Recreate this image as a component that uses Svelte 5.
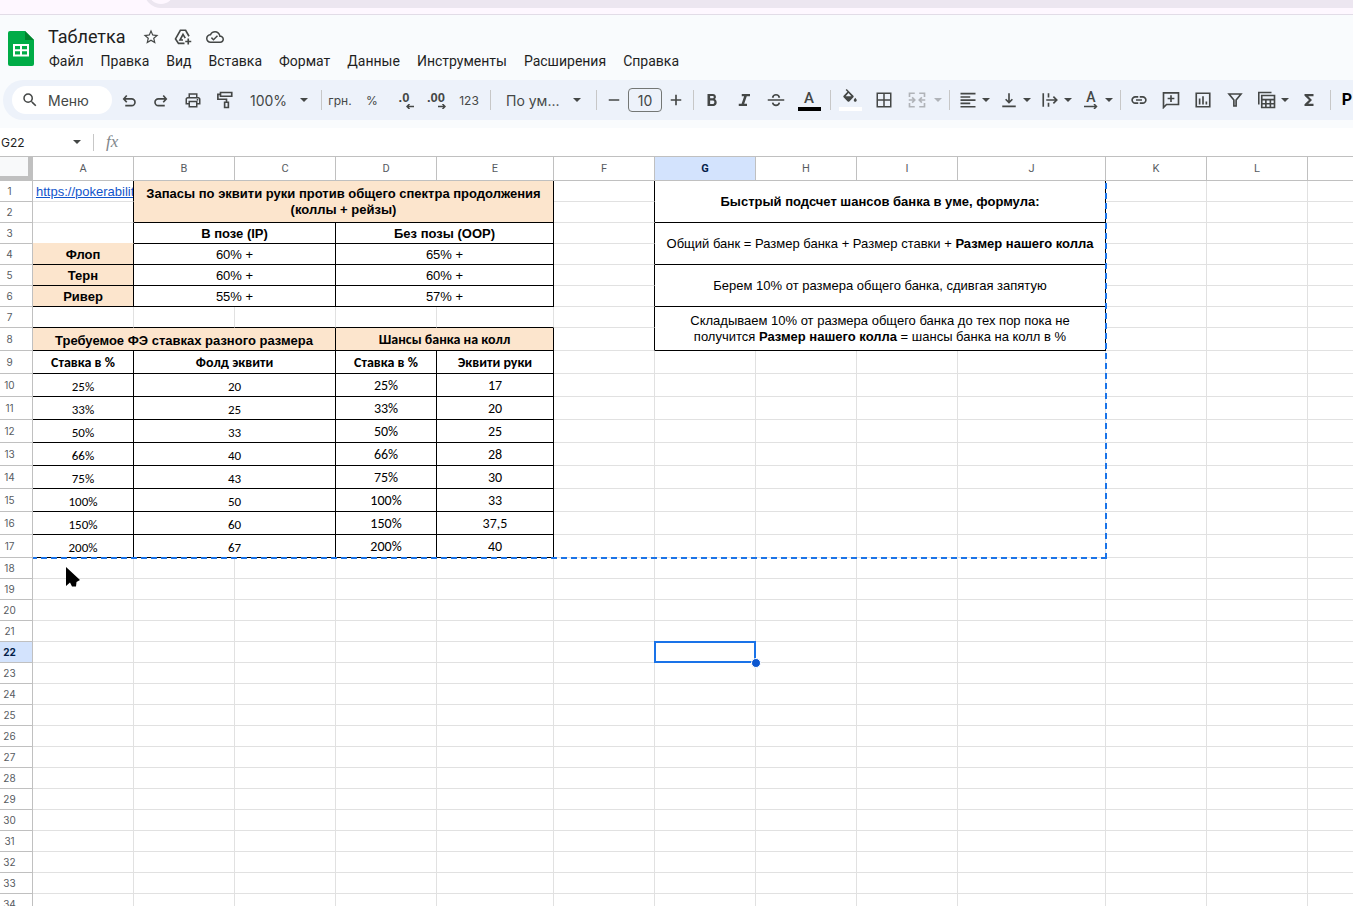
<script lang="ts">
  type Cell = {
    text?: string;
    bold?: string;
    after?: string;
    cols?: number;
    rows?: number;
    cls?: string;
  };

  const columns = [
    { name: "A", width: 101 },
    { name: "B", width: 101 },
    { name: "C", width: 101 },
    { name: "D", width: 101 },
    { name: "E", width: 117 },
    { name: "F", width: 101 },
    { name: "G", width: 101 },
    { name: "H", width: 101 },
    { name: "I", width: 101 },
    { name: "J", width: 148 },
    { name: "K", width: 101 },
    { name: "L", width: 101 },
    { name: "M", width: 101 },
  ];

  const menus = ["Файл", "Правка", "Вид", "Вставка", "Формат", "Данные", "Инструменты", "Расширения", "Справка"];

  const cells: Record<string, Cell> = {
    B1: { text: "Запасы по эквити руки против общего спектра продолжения (коллы + рейзы)", cols: 4, rows: 2, cls: "box fill strong" },
    B3: { text: "В позе (IP)", cols: 2, cls: "box strong" },
    D3: { text: "Без позы (OOP)", cols: 2, cls: "box strong" },
    A4: { text: "Флоп", cls: "box fill strong" },
    B4: { text: "60% +", cols: 2, cls: "box" },
    D4: { text: "65% +", cols: 2, cls: "box" },
    A5: { text: "Терн", cls: "box fill strong" },
    B5: { text: "60% +", cols: 2, cls: "box" },
    D5: { text: "60% +", cols: 2, cls: "box" },
    A6: { text: "Ривер", cls: "box fill strong" },
    B6: { text: "55% +", cols: 2, cls: "box" },
    D6: { text: "57% +", cols: 2, cls: "box" },
    A8: { text: "Требуемое ФЭ ставках разного размера", cols: 3, cls: "box fill strong low" },
    D8: { text: "Шансы банка на колл", cols: 2, cls: "box fill strong calibri" },
    A9: { text: "Ставка в %", cls: "box strong calibri" },
    B9: { text: "Фолд эквити", cols: 2, cls: "box strong calibri" },
    D9: { text: "Ставка в %", cls: "box strong calibri" },
    E9: { text: "Эквити руки", cls: "box strong calibri" },
    G1: { bold: "Быстрый подсчет шансов банка в уме, формула:", cols: 4, rows: 2, cls: "box" },
    G3: { text: "Общий банк = Размер банка + Размер ставки + ", bold: "Размер нашего колла", cols: 4, rows: 2, cls: "box" },
    G5: { text: "Берем 10% от размера общего банка, сдивгая запятую", cols: 4, rows: 2, cls: "box" },
    G7: {
      text: "Складываем 10% от размера общего банка до тех пор пока не получится ",
      bold: "Размер нашего колла",
      after: " = шансы банка на колл в %",
      cols: 4,
      rows: 2,
      cls: "box roomy",
    },
  };

  const odds = [
    ["25%", "20", "17"],
    ["33%", "25", "20"],
    ["50%", "33", "25"],
    ["66%", "40", "28"],
    ["75%", "43", "30"],
    ["100%", "50", "33"],
    ["150%", "60", "37,5"],
    ["200%", "67", "40"],
  ];
  odds.forEach(([bet, fold, equity], i) => {
    const r = 10 + i;
    cells["A" + r] = { text: bet, cls: "box calibri small" };
    cells["B" + r] = { text: fold, cols: 2, cls: "box calibri small" };
    cells["D" + r] = { text: bet, cls: "box calibri" };
    cells["E" + r] = { text: equity, cls: "box calibri" };
  });

  // cells swallowed by a merge are not rendered
  const covered = new Set<string>();
  for (const key in cells) {
    const start = columns.findIndex((c) => c.name === key[0]);
    const row = Number(key.slice(1));
    for (let y = 0; y < (cells[key].rows ?? 1); y++) {
      for (let x = 0; x < (cells[key].cols ?? 1); x++) {
        if (x || y) covered.add(columns[start + x].name + (row + y));
      }
    }
  }

  const rows = Array.from({ length: 50 }, (_, i) => i + 1);
  const rowHeight = (r: number) => (r >= 8 && r <= 17 ? 23 : 21);

  function borders(col: string, r: number) {
    let cls = "";
    if ((col === "A" && r < 4) || (col === "F" && r < 9)) cls += " edge-right";
    if (r === 7 && col < "F") cls += " edge-bottom";
    if (col === "A" && r === 3) cls += " soft-bottom";
    return cls;
  }

  const active = { col: "G", row: 22 };
  let nameBox = "G22";
  let formula = "";
  let fontSize = "10";

  // marching-ants range A1:J17
  const copyWidth = columns.slice(0, 10).reduce((sum, c) => sum + c.width, 0) + 1;
  const copyHeight = rows.slice(0, 17).reduce((sum, r) => sum + rowHeight(r), 0) + 1;

  const icons: Record<string, { f?: string; s?: string }> = {
    star: { f: "M22 9.24l-7.19-.62L12 2 9.19 8.63 2 9.24l5.46 4.73L5.82 21 12 17.27 18.18 21l-1.63-7.03L22 9.24zM12 15.4l-3.76 2.27 1-4.28-3.32-2.88 4.38-.38L12 6.1l1.71 4.04 4.38.38-3.32 2.88 1 4.28L12 15.4z" },
    drive: { s: "M14 20.500H6L2 14.500 8.500 3h7l4.500 8M12 16H8l4-7.500 3 5M19 14v8M15 18h8" },
    cloud: { f: "M19.35 10.04C18.67 6.59 15.64 4 12 4 9.11 4 6.6 5.64 5.35 8.04 2.34 8.36 0 10.91 0 14c0 3.31 2.69 6 6 6h13c2.76 0 5-2.24 5-5 0-2.64-2.05-4.78-4.65-4.96zM19 18H6c-2.21 0-4-1.79-4-4 0-2.05 1.53-3.76 3.56-3.97l1.07-.11.5-.95C8.08 7.14 9.94 6 12 6c2.62 0 4.88 1.86 5.39 4.43l.3 1.5 1.53.11c1.56.1 2.78 1.41 2.78 2.96 0 1.65-1.35 3-3 3zm-9-3.82l-2.09-2.09L6.5 13.5 10 17l6.01-6.01-1.41-1.41z" },
    search: { f: "M15.5 14h-.79l-.28-.27A6.471 6.471 0 0 0 16 9.5 6.5 6.5 0 1 0 9.500 16c1.61 0 3.09-.59 4.23-1.57l.27.28v.79l5 4.99L20.49 19l-4.99-5zm-6 0C7.01 14 5 11.99 5 9.5S7.01 5 9.500 5 14 7.01 14 9.500 11.99 14 9.500 14z" },
    undo: { s: "M9 6L5 10.500 9 15M5 10.500h10.500a4.500 4.500 0 0 1 0 9H7" },
    redo: { s: "M15 6l4 4.500L15 15M19 10.500H8.500a4.500 4.500 0 0 0 0 9H17" },
    print: { f: "M19 8h-1V3H6v5H5c-1.66 0-3 1.34-3 3v7h4v4h12v-4h4v-7c0-1.66-1.34-3-3-3zM8 5h8v3H8V5zm8 15H8v-5h8v5zm2-4v-3H6v3H4v-5c0-.55.45-1 1-1h14c.55 0 1 .45 1 1v5h-2zM17 10.500h2v2h-2z" },
    paint: { s: "M6 2h15v5H6zM6 4.500H2.500V11h11.500v4M11.500 15h5v7h-5z" },
    plus: { s: "M12 5v14M5 12h14" },
    minus: { s: "M5 12h14" },
    bold: { f: "M15.600 10.79c.97-.67 1.65-1.77 1.65-2.79 0-2.26-1.75-4-4-4H6v16h8.040c2.09 0 4.210-1.900 4.210-4.790 0-1.920-1.160-3.620-2.650-4.420zM9.500 6.800h3.500c.83 0 1.300.67 1.300 1.400s-.67 1.500-1.500 1.500H9.500zm4 10.400h-4v-4.500h4c1 0 1.600 1 1.600 2.200s-.8 2.300-1.600 2.300z" },
    italic: { f: "M9 4v3h3.200l-3.400 10H5v3h11v-3h-3.700l3.400-10H20V4z" },
    strike: { s: "M1 12h22M16.500 9C16 6 14 5 12 5S8 6 7.500 9M7.500 15.500c.5 2.500 2.500 3.700 4.500 3.700s4-1.200 4.500-3.700" },
    bucket: { f: "M16.560 8.940L7.620 0 6.210 1.410l2.380 2.380-5.150 5.150c-.59.59-.59 1.540 0 2.120l5.500 5.500c.29.29.68.44 1.060.44s.77-.15 1.060-.44l5.500-5.500c.59-.58.59-1.530 0-2.120zM6.210 9.500L10 5.210 13.790 9.500zM19 11.500s-2 2.170-2 3.500c0 1.100.9 2 2 2s2-.9 2-2c0-1.330-2-3.500-2-3.500z" },
    grid: { f: "M2 2v20h20V2H2zm9 18H4v-7h7v7zm0-9H4V4h7v7zm9 9h-7v-7h7v7zm0-9h-7V4h7v7z" },
    merge: { s: "M9 3H2v5M2 16v5h7M15 3h7v5M22 16v5h-7M1 12h8M5.500 8.500L9 12l-3.500 3.500M23 12h-8M18.500 8.500L15 12l3.500 3.500" },
    align: { s: "M2 3.500h20M2 8h13M2 12.200h20M2 16.500h13M2 21h20" },
    valign: { s: "M12 3v12M7.500 11L12 15.500 16.500 11M3 20.500h18" },
    wrap: { s: "M3 3v18M10 3v5.500M10 15.500V21M7 12h14M16.500 7.500L21 12l-4.500 4.500" },
    link: { f: "M3.9 12c0-1.710 1.390-3.100 3.100-3.100h4V6.700H7C4.240 6.700 1.700 9.240 1.700 12s2.540 5.300 5.300 5.300h4v-2.200H7c-1.710 0-3.100-1.390-3.100-3.100zM8 13h8v-2H8v2zm9-6.300h-4v2.200h4c1.710 0 3.100 1.390 3.100 3.100s-1.390 3.100-3.100 3.100h-4v2.200h4c2.760 0 5.300-2.540 5.300-5.300S19.760 6.700 17 6.700z" },
    comment: { s: "M2 22V2.500h20V18H6zM12 5.500v9M7.500 10h9" },
    chart: { s: "M3 3h18v18H3zM7.500 10v8M12 7v11M16.500 14v4" },
    filter: { s: "M4 4h16l-6.500 8v8h-3v-8z" },
    views: { s: "M1 18V2h17M5 6h17v16H5zM5 11.500h17M5 17h17M10.500 11.500V22M16.500 11.500V22" },
    sum: { f: "M18 4H6v2.300l6 5.700-6 5.700V20h12v-3h-7l5-5-5-5h7z" },
  };
</script>

{#snippet icon(name: string)}
  <svg class="icon" viewBox="0 0 24 24" aria-hidden="true">
    {#if icons[name].f}<path d={icons[name].f} fill="currentColor" fill-rule="evenodd" />{/if}
    {#if icons[name].s}<path d={icons[name].s} fill="none" stroke="currentColor" stroke-width="2.200" />{/if}
  </svg>
{/snippet}

{#snippet caret()}
  <svg class="caret" viewBox="0 0 8 4" aria-hidden="true"><path d="M0 0h8L4 4z" fill="currentColor" /></svg>
{/snippet}

<div class="page">
  <div class="browser"><div class="address"><span class="site"></span></div></div>

  <header>
    <svg class="logo" viewBox="0 0 26 35" aria-label="Таблицы" role="img">
      <path d="M2 0h15l9 9v24a2 2 0 0 1-2 2H2a2 2 0 0 1-2-2V2a2 2 0 0 1 2-2z" fill="#00ac47" />
      <path d="M17 0l9 9h-9z" fill="#00832d" />
      <path d="M5 13h16v12.500H5zM7 15v3.200h5V15zm7 0v3.200h5V15zM7 20.200v3.300h5v-3.300zm7 0v3.300h5v-3.300z" fill="#fff" fill-rule="evenodd" />
    </svg>
    <div class="heading">
      <div class="title-row">
        <h1>Таблетка</h1>
        <button class="plain" aria-label="Пометить">{@render icon("star")}</button>
        <button class="plain" aria-label="Переместить">{@render icon("drive")}</button>
        <button class="plain" aria-label="Сохранено">{@render icon("cloud")}</button>
      </div>
      <nav>
        {#each menus as item}
          <button>{item}</button>
        {/each}
      </nav>
    </div>
  </header>

  <div class="toolbar">
    <button class="search">{@render icon("search")}<span>Меню</span></button>
    <button aria-label="Отменить">{@render icon("undo")}</button>
    <button aria-label="Повторить">{@render icon("redo")}</button>
    <button aria-label="Печать">{@render icon("print")}</button>
    <button aria-label="Копировать форматирование">{@render icon("paint")}</button>
    <button class="zoom">100%{@render caret()}</button>
    <span class="sep"></span>
    <button class="text">грн.</button>
    <button class="text">%</button>
    <button class="decimal">.0<svg viewBox="0 0 8 5" aria-hidden="true"><path d="M8 2.500H1M3.500 0L1 2.500 3.500 5" fill="none" stroke="currentColor" stroke-width="1.500" /></svg></button>
    <button class="decimal">.00<svg viewBox="0 0 8 5" aria-hidden="true"><path d="M0 2.500h7M4.500 0L7 2.500 4.500 5" fill="none" stroke="currentColor" stroke-width="1.500" /></svg></button>
    <button class="text broad">123</button>
    <span class="sep"></span>
    <button class="font">По ум...{@render caret()}</button>
    <span class="sep"></span>
    <button class="minus" aria-label="Уменьшить">{@render icon("minus")}</button>
    <input class="size" aria-label="Размер шрифта" bind:value={fontSize} />
    <button class="plus" aria-label="Увеличить">{@render icon("plus")}</button>
    <span class="sep"></span>
    <button aria-label="Полужирный">{@render icon("bold")}</button>
    <button aria-label="Курсив">{@render icon("italic")}</button>
    <button aria-label="Зачеркнутый">{@render icon("strike")}</button>
    <button class="swatch broad"><span>A</span><i class="black"></i></button>
    <span class="sep"></span>
    <button class="swatch broad" aria-label="Цвет заливки">{@render icon("bucket")}<i></i></button>
    <button class="broad" aria-label="Границы">{@render icon("grid")}</button>
    <button class="split off" aria-label="Объединить ячейки">{@render icon("merge")}{@render caret()}</button>
    <span class="sep"></span>
    <button class="split" aria-label="Выравнивание">{@render icon("align")}{@render caret()}</button>
    <button class="split" aria-label="Вертикальное выравнивание">{@render icon("valign")}{@render caret()}</button>
    <button class="split" aria-label="Перенос текста">{@render icon("wrap")}{@render caret()}</button>
    <button class="split">
      <span class="rotate">A<svg viewBox="0 0 14 5" aria-hidden="true"><path d="M0 2.500h12M10 0l2.500 2.500L10 5" fill="none" stroke="currentColor" stroke-width="1.500" /></svg></span>
      {@render caret()}
    </button>
    <span class="sep"></span>
    <button aria-label="Вставить ссылку">{@render icon("link")}</button>
    <button aria-label="Комментарий">{@render icon("comment")}</button>
    <button aria-label="Диаграмма">{@render icon("chart")}</button>
    <button aria-label="Фильтр">{@render icon("filter")}</button>
    <button class="split" aria-label="Фильтры">{@render icon("views")}{@render caret()}</button>
    <button class="broad" aria-label="Функции">{@render icon("sum")}</button>
    <span class="sep"></span>
    <button class="addon">P</button>
  </div>

  <div class="formula-bar">
    <input class="name-box" aria-label="Имя" bind:value={nameBox} />
    {@render caret()}
    <span class="rule"></span>
    <label for="formula">fx</label>
    <input id="formula" class="formula" bind:value={formula} />
  </div>

  <main>
    <table>
      <colgroup>
        <col class="numbers" />
        {#each columns as col, i}
          <col style={i < columns.length - 1 ? `width: ${col.width}px` : ""} />
        {/each}
      </colgroup>
      <thead>
        <tr>
          <th class="corner"></th>
          {#each columns as col}
            <th class:active={col.name === active.col}>{col.name}</th>
          {/each}
        </tr>
      </thead>
      <tbody>
        {#each rows as r}
          <tr style="height: {rowHeight(r)}px">
            <th class:active={r === active.row}>{r}</th>
            {#each columns as col}
              {@const key = col.name + r}
              {@const cell = cells[key]}
              {#if key === "A1"}
                <td class="edge-right link"><a href="https://pokerability.ru">https://pokerability</a></td>
              {:else if cell}
                <td class={cell.cls} colspan={cell.cols} rowspan={cell.rows}>{cell.text ?? ""}{#if cell.bold}<b>{cell.bold}</b>{/if}{cell.after ?? ""}</td>
              {:else if col.name === active.col && r === active.row}
                <td class="selected"><span class="cursor-box"><i></i></span></td>
              {:else if !covered.has(key)}
                <td class={borders(col.name, r)}></td>
              {/if}
            {/each}
          </tr>
        {/each}
      </tbody>
    </table>
    <div class="copy-range" style="width: {copyWidth}px; height: {copyHeight}px"></div>
    <svg class="pointer" viewBox="0 0 14 21" aria-hidden="true">
      <path d="M0 0v19l4-3.500 2 4h4l.500-4.500L14 13z" />
    </svg>
  </main>
</div>

<style>
  :global(body) { margin: 0; }

  .page {
    display: flex;
    flex-direction: column;
    height: 100vh;
    overflow: hidden;
    background: #f9fbfd;
    color: #1f1f1f;
    font-family: Inter, Roboto, sans-serif;
  }

  button {
    display: flex;
    align-items: center;
    justify-content: center;
    padding: 0;
    border: 0;
    background: none;
    color: inherit;
    font: inherit;
  }

  input {
    box-sizing: border-box;
    min-width: 0;
    border: 0;
    background: none;
    font: inherit;
    outline: none;
  }

  .icon { width: 18px; height: 18px; flex: none; }
  .caret { width: 8px; height: 4px; flex: none; }

  .browser {
    display: flex;
    flex: none;
    align-items: flex-end;
    box-sizing: border-box;
    height: 15px;
    overflow: hidden;
    padding: 0 0 6px 144px;
    border-bottom: 1px solid #e2dce7;
    background: #fef7ff;
  }

  .address {
    flex: 1;
    height: 34px;
    border-radius: 17px 0 0 17px;
    background: #ece6f0;
  }

  .site {
    display: block;
    width: 26px;
    height: 26px;
    margin: 4px;
    border-radius: 50%;
    background: #fef7ff;
  }

  header {
    display: flex;
    flex: none;
    gap: 14px;
    height: 65px;
    padding-left: 8px;
  }

  .logo { width: 26px; height: 35px; margin-top: 16px; }

  .title-row {
    display: flex;
    align-items: center;
    height: 24px;
    margin-top: 10px;
    color: #444746;
  }

  h1 {
    margin: 0 9px 0 0;
    color: #1f1f1f;
    font: 400 18px/24px Roboto, sans-serif;
  }

  .plain { width: 32px; height: 24px; }

  nav { display: flex; gap: 17px; padding: 3px 0 0 1px; }
  nav button { font: 400 14px/18px Roboto, sans-serif; }

  .toolbar {
    display: flex;
    flex: none;
    align-items: center;
    height: 40px;
    margin-left: 3px;
    padding-left: 9px;
    overflow: hidden;
    border-radius: 20px 0 0 20px;
    background: #edf2fa;
    color: #444746;
    font-size: 14px;
  }

  .toolbar button { box-sizing: border-box; width: 32px; height: 28px; flex: none; }
  .toolbar .search {
    justify-content: flex-start;
    width: 100px;
    gap: 9px;
    margin-right: 1px;
    padding-left: 9px;
    border-radius: 14px;
    background: #fff;
  }
  .toolbar .broad { width: 34px; }
  .toolbar .zoom { width: 76px; justify-content: space-between; padding: 0 9px; }
  .toolbar .font { width: 99px; justify-content: space-between; padding: 0 11px 0 13px; }
  .toolbar .minus { width: 29px; }
  .toolbar .plus { width: 27px; }
  .toolbar .text { font-size: 12px; }

  .decimal {
    flex-direction: column;
    font: 700 13px/12px "Liberation Sans", sans-serif;
  }
  .decimal svg { width: 8px; height: 5px; margin-left: 12px; }

  .sep { width: 1px; height: 20px; flex: none; margin: 0 2px 0 4px; background: #c7c7c7; }

  .size {
    width: 34px;
    height: 24px;
    flex: none;
    padding: 0;
    border: 1px solid #747775;
    border-radius: 4px;
    color: #444746;
    text-align: center;
  }

  .swatch { flex-direction: column; }
  .swatch span { font: 500 15px/17px Roboto, sans-serif; }
  .swatch i { width: 23px; height: 4px; background: #fff; }
  .swatch .black { background: #000; }

  .toolbar .split { width: 41px; gap: 5px; padding: 0 3px 0 7px; }
  .toolbar .off { width: 44px; gap: 8px; color: #b0b3b8; }

  .rotate { display: flex; flex-direction: column; align-items: center; width: 18px; font: 500 14px/13px Roboto, sans-serif; }
  .rotate svg { width: 14px; height: 5px; }

  .toolbar .addon { width: 28px; color: #000; font: 700 16px/20px Roboto, sans-serif; }

  .formula-bar {
    display: flex;
    flex: none;
    align-items: center;
    height: 28px;
    margin-top: 8px;
    border-bottom: 1px solid #c0c0c0;
    background: #fff;
    color: #444746;
  }

  .name-box { width: 73px; padding: 0 0 0 1px; color: #1f1f1f; font-size: 12px; }
  .rule { width: 1px; height: 17px; margin: 0 12px; background: #c7c7c7; }
  label { color: #80868b; font: italic 17px/20px "Liberation Serif", serif; }
  .formula { flex: 1; margin-left: 8px; font-size: 13px; }

  main { position: relative; flex: 1; overflow: hidden; background: #fff; }

  table {
    width: 100%;
    min-width: 1409px;
    border-spacing: 0;
    table-layout: fixed;
    color: #000;
    font: 13px/16px "Liberation Sans", Arial, sans-serif;
  }

  .numbers { width: 33px; }

  th, td {
    box-sizing: border-box;
    overflow: hidden;
    padding: 0 3px;
    border-right: 1px solid #e1e1e1;
    border-bottom: 1px solid #e1e1e1;
    text-align: center;
  }

  th {
    border-color: #c0c0c0;
    color: #575b5f;
    font: 400 11px/16px Roboto, sans-serif;
  }

  thead th { height: 24px; }
  tbody th { padding: 0 13px 0 0; font: 400 10px/16px Inter, Roboto, sans-serif; }
  th.active { background: #d3e3fd; color: #041e49; font-weight: 700; }

  .corner { border-right: 5px solid #c0c0c0; border-bottom: 5px solid #c0c0c0; background: #f8f9fa; }

  .box { padding-top: 2px; border-color: #000; }
  td[rowspan="2"] { padding-top: 0; }
  .fill { background: #fce5cd; }
  .strong, b { font-weight: 700; }
  .calibri { font-family: Carlito, Lato, "Open Sans", sans-serif; font-size: 14px; }
  .small { padding-top: 3px; font-size: 13px; }
  .low { padding-top: 3px; }
  .roomy { padding: 0 20px; }
  .edge-right { border-right-color: #000; }
  .edge-bottom { border-bottom-color: #000; }
  .soft-bottom { border-bottom-color: #fce5cd; }
  .link { padding-top: 2px; text-align: left; white-space: nowrap; }
  .link a { color: #1155cc; }

  .selected { position: relative; overflow: visible; }
  .cursor-box { position: absolute; inset: -1px; border: 2px solid #1a73e8; }
  .cursor-box i {
    position: absolute;
    right: -7px;
    bottom: -7px;
    width: 8px;
    height: 8px;
    border: 1px solid #fff;
    border-radius: 50%;
    background: #0b57d0;
  }

  .copy-range {
    position: absolute;
    top: 24px;
    left: 33px;
    pointer-events: none;
    background:
      repeating-linear-gradient(to left, #1a73e8 0 6px, transparent 6px 10px) bottom / 100% 2px no-repeat,
      repeating-linear-gradient(to top, #1a73e8 0 6px, transparent 6px 10px) right / 2px 100% no-repeat;
  }

  .pointer { position: absolute; top: 410px; left: 66px; width: 14px; height: 21px; }
</style>
